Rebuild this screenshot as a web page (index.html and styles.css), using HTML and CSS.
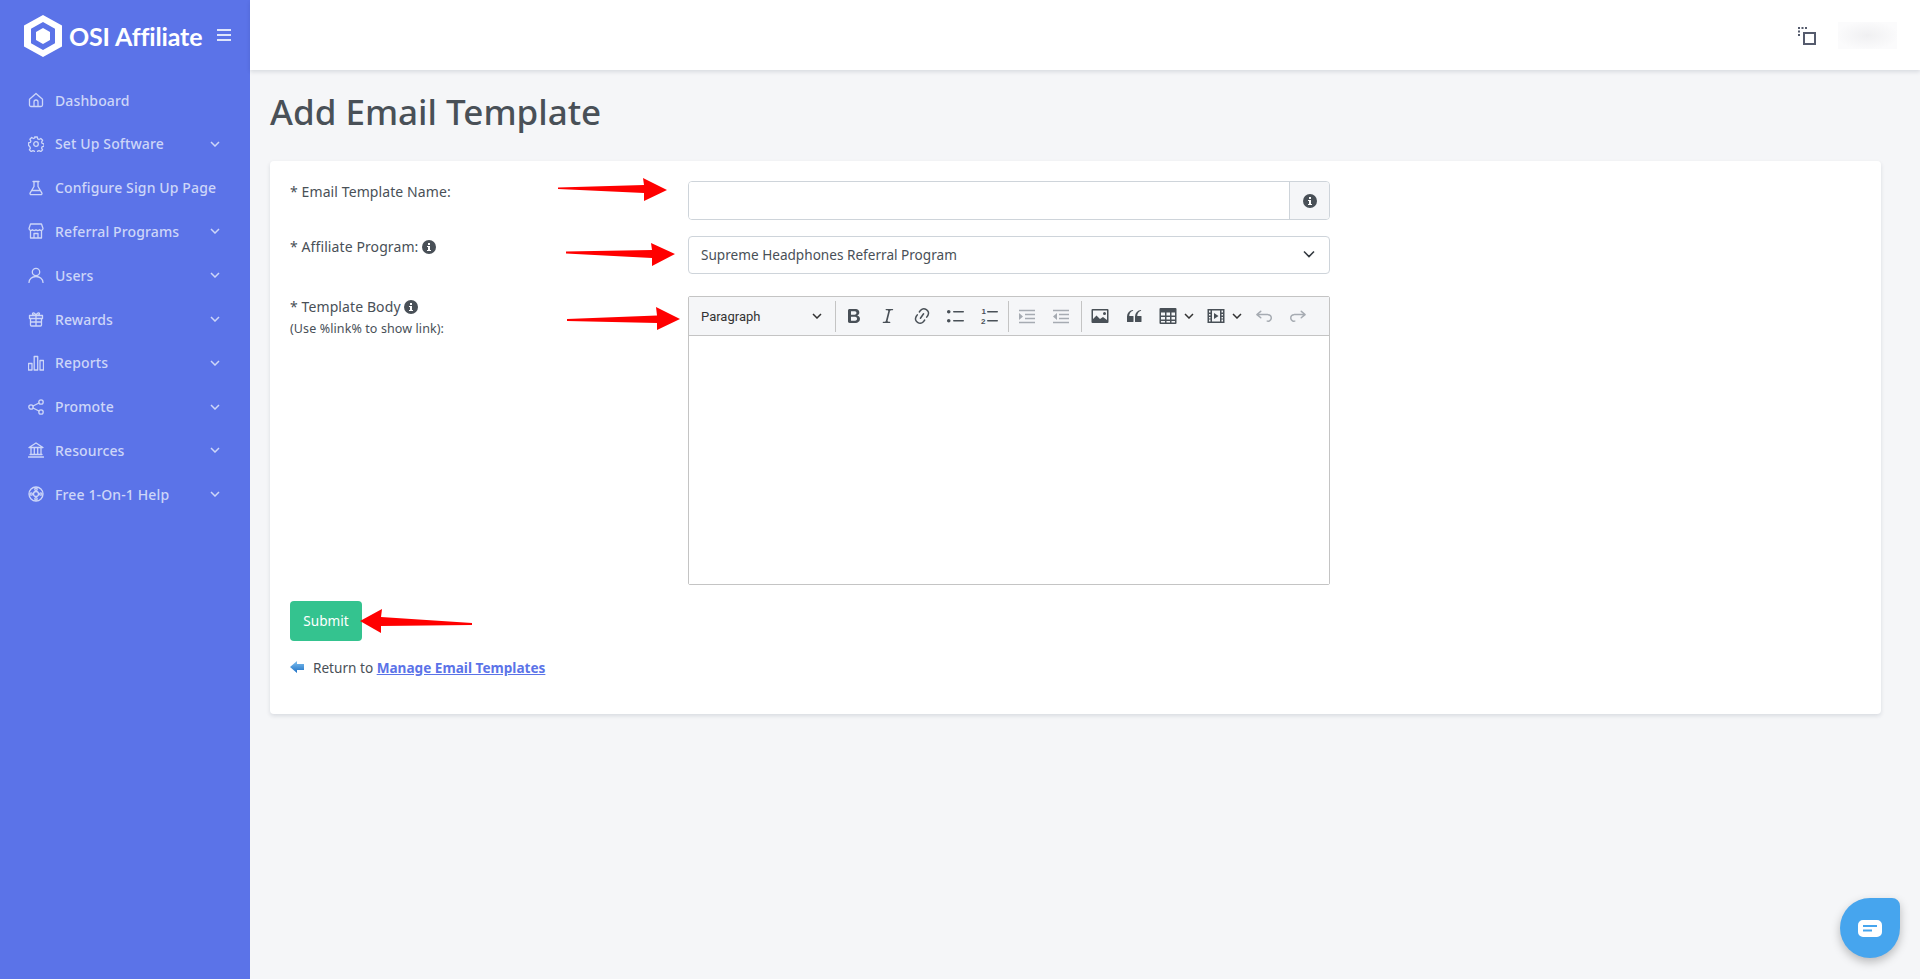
FILE: index.html
```html
<!DOCTYPE html>
<html lang="en">
<head>
<meta charset="utf-8">
<title>Add Email Template</title>
<link rel="stylesheet" href="styles.css">
</head>
<body>
<div class="app">
  <aside class="sidebar">
    <div class="brand">
      <svg class="brand-mark" viewBox="0 0 38 42"><path fill="#fff" fill-rule="evenodd" d="M19 0 38 10.500v21L19 42 0 31.500v-21zM19 7 7 13.800v14.400L19 35l12-6.800V13.800z"/><path fill="#fff" d="M19 13l7 4v8l-7 4-7-4v-8z"/></svg>
      <span class="brand-name">OSI Affiliate</span>
      <svg class="brand-menu" viewBox="0 0 14 12"><path d="M0 1h14M0 6h14M0 11h14" stroke="#dfe5fb" stroke-width="2"/></svg>
    </div>
    <nav class="nav">
      <a class="nav-item"><svg class="nav-icon" viewBox="0 0 16 16"><path d="M1.500 7.200 8 1.500l6.500 5.700V13a1.500 1.500 0 0 1-1.500 1.500H3A1.500 1.500 0 0 1 1.500 13zM6 14.500V10a2 2 0 0 1 4 0v4.500"/></svg><span>Dashboard</span></a>
      <a class="nav-item"><svg class="nav-icon" viewBox="0 0 16 16"><circle cx="8" cy="8" r="2.300"/><path d="M6.700 1h2.600l.4 1.900 1.400.6 1.700-1 1.800 1.800-1 1.700.6 1.400 1.800.4v2.500l-1.800.4-.6 1.400 1 1.700-1.800 1.800-1.700-1-1.400.6-.4 1.800H6.700l-.4-1.800-1.400-.6-1.700 1-1.800-1.800 1-1.700-.6-1.400L.5 9.300V6.800l1.800-.4.6-1.400-1-1.700 1.800-1.800 1.700 1 1.400-.6z" stroke-linejoin="round"/></svg><span>Set Up Software</span><svg class="nav-chev" viewBox="0 0 10 6"><path d="M1 1l4 4 4-4"/></svg></a>
      <a class="nav-item"><svg class="nav-icon" viewBox="0 0 16 16"><path d="M5 1.500h6M6 1.500v5L2.200 12.800c-.6 1 .1 1.900 1.100 1.900h9.400c1 0 1.700-.9 1.100-1.900L10 6.500v-5M4.500 10.500h7"/></svg><span>Configure Sign Up Page</span></a>
      <a class="nav-item"><svg class="nav-icon" viewBox="0 0 16 16"><path d="M2.500 1h11l1.500 4.500a2 2 0 0 1-3.500 1.200 2.600 2.600 0 0 1-3.500 0 2.600 2.600 0 0 1-3.500 0A2 2 0 0 1 1 5.500zM2.500 7.500V15h11V7.500M6 15v-4.500h4V15"/></svg><span>Referral Programs</span><svg class="nav-chev" viewBox="0 0 10 6"><path d="M1 1l4 4 4-4"/></svg></a>
      <a class="nav-item"><svg class="nav-icon" viewBox="0 0 16 16"><circle cx="8" cy="5" r="3.700"/><path d="M1 15.500c0-3.500 3-6 7-6s7 2.500 7 6"/></svg><span>Users</span><svg class="nav-chev" viewBox="0 0 10 6"><path d="M1 1l4 4 4-4"/></svg></a>
      <a class="nav-item"><svg class="nav-icon" viewBox="0 0 16 16"><path d="M2.500 7.500V14a1 1 0 0 0 1 1h9a1 1 0 0 0 1-1V7.500M1.500 4.500h13v3h-13zM8 4.500V15M2.500 11h11M8 4.500C6 4.500 4.500 3.800 4.500 2.600 4.500 1.500 6.800 1 8 4.500 9.200 1 11.500 1.500 11.500 2.600c0 1.200-1.500 1.900-3.500 1.900z"/></svg><span>Rewards</span><svg class="nav-chev" viewBox="0 0 10 6"><path d="M1 1l4 4 4-4"/></svg></a>
      <a class="nav-item"><svg class="nav-icon" viewBox="0 0 16 16"><path d="M.5 8.500h3.500V15H.5zM6.200 1.500h3.500V15H6.200zM12 5.500h3.500V15H12z"/></svg><span>Reports</span><svg class="nav-chev" viewBox="0 0 10 6"><path d="M1 1l4 4 4-4"/></svg></a>
      <a class="nav-item"><svg class="nav-icon" viewBox="0 0 16 16"><circle cx="3" cy="8" r="2.200"/><circle cx="13" cy="3" r="2.200"/><circle cx="13" cy="13" r="2.200"/><path d="M5 7l6-3M5 9l6 3"/></svg><span>Promote</span><svg class="nav-chev" viewBox="0 0 10 6"><path d="M1 1l4 4 4-4"/></svg></a>
      <a class="nav-item"><svg class="nav-icon" viewBox="0 0 16 16"><path d="M1 5.500 8 1l7 4.500zM3 5.500V12M6.300 5.500V12M9.700 5.500V12M13 5.500V12M2 12.500h12M.5 15h15"/></svg><span>Resources</span><svg class="nav-chev" viewBox="0 0 10 6"><path d="M1 1l4 4 4-4"/></svg></a>
      <a class="nav-item"><svg class="nav-icon" viewBox="0 0 16 16"><circle cx="8" cy="8" r="7"/><circle cx="8" cy="8" r="2.500"/><circle cx="8" cy="3.200" r="1.200"/><circle cx="8" cy="12.800" r="1.200"/><circle cx="3.200" cy="8" r="1.200"/><circle cx="12.800" cy="8" r="1.200"/></svg><span>Free 1-On-1 Help</span><svg class="nav-chev" viewBox="0 0 10 6"><path d="M1 1l4 4 4-4"/></svg></a>
    </nav>
  </aside>

  <div class="main">
    <header class="topbar">
      <svg class="top-icon" viewBox="0 0 18 18"><path class="dash" d="M1 9V1h9"/><rect x="6" y="6" width="11" height="11"/></svg>
      <div class="top-user"></div>
    </header>
    <main class="content">
      <h1 class="title">Add Email Template</h1>
      <section class="card">
        <div class="row row-name">
          <label class="label">* Email Template Name:</label>
          <div class="input-group">
            <div class="input"></div>
            <div class="addon"><svg class="info" viewBox="0 0 14 14"><circle cx="7" cy="7" r="7"/><path d="M6 6h2v4h1v1H5v-1h1V7H5V6zM6 3h2v2H6z" fill="#fff"/></svg></div>
          </div>
        </div>
        <div class="row row-program">
          <label class="label">* Affiliate Program: <svg class="info" viewBox="0 0 14 14"><circle cx="7" cy="7" r="7"/><path d="M6 6h2v4h1v1H5v-1h1V7H5V6zM6 3h2v2H6z" fill="#fff"/></svg></label>
          <div class="select"><span>Supreme Headphones Referral Program</span><svg class="select-chev" viewBox="0 0 12 8"><path d="M1 1.500l5 5 5-5"/></svg></div>
        </div>
        <div class="row row-body">
          <label class="label">* Template Body <svg class="info" viewBox="0 0 14 14"><circle cx="7" cy="7" r="7"/><path d="M6 6h2v4h1v1H5v-1h1V7H5V6zM6 3h2v2H6z" fill="#fff"/></svg><small class="hint">(Use %link% to show link):</small></label>
          <div class="editor">
            <div class="toolbar">
              <div class="tb-drop"><span>Paragraph</span><svg class="tb-chev" viewBox="0 0 10 6"><path d="M1 1l4 4 4-4"/></svg></div>
              <i class="tb-sep"></i>
              <button class="tb-btn"><svg viewBox="0 0 20 20"><path d="M10.187 17H5.773c-.637 0-1.092-.138-1.364-.415-.273-.277-.409-.718-.409-1.323V4.738c0-.617.14-1.062.419-1.332.279-.27.73-.406 1.354-.406h4.680c.69 0 1.288.041 1.793.124.506.083.96.242 1.360.478.341.197.644.447.906.75a3.262 3.262 0 0 1 .808 2.162c0 1.401-.722 2.426-2.167 3.075C15.050 10.175 16 11.315 16 13.010a3.756 3.756 0 0 1-2.296 3.504 6.100 6.100 0 0 1-1.517.377c-.571.073-1.238.11-2 .11zm-.217-6.217H7v4.087h3.069c1.977 0 2.965-.69 2.965-2.072 0-.707-.256-1.220-.768-1.537-.512-.319-1.277-.478-2.296-.478zM7 5.130v3.619h2.606c.729 0 1.292-.067 1.690-.2a1.600 1.600 0 0 0 .91-.765c.165-.267.247-.566.247-.897 0-.707-.26-1.176-.778-1.409-.519-.232-1.310-.348-2.375-.348H7z"/></svg></button>
              <button class="tb-btn"><svg viewBox="0 0 20 20"><path d="m9.586 14.633.021.004c-.036.335.095.655.393.962.082.083.173.15.274.201h1.474a.6.6 0 1 1 0 1.200H5.304a.6.6 0 0 1 0-1.200h1.150c.474-.07.809-.182 1.005-.334.157-.122.291-.32.404-.597l2.416-9.550a1.053 1.053 0 0 0-.281-.823 1.120 1.120 0 0 0-.442-.296H8.150a.6.6 0 0 1 0-1.200h6.443a.6.6 0 1 1 0 1.200h-1.195c-.376.056-.65.155-.823.296-.215.175-.423.439-.623.79l-2.366 9.347z"/></svg></button>
              <button class="tb-btn"><svg viewBox="0 0 20 20"><path d="m11.077 15 .991-1.416a.75.75 0 1 1 1.229.86l-1.148 1.640a.748.748 0 0 1-.217.206 5.251 5.251 0 0 1-8.503-5.955.741.741 0 0 1 .12-.274l1.147-1.639a.75.75 0 1 1 1.228.86L4.933 10.700l.006.003a3.750 3.750 0 0 0 6.132 4.294l.006.004zm5.494-5.335a.748.748 0 0 1-.12.274l-1.147 1.639a.75.75 0 1 1-1.228-.86l.86-1.230a3.750 3.750 0 0 0-6.144-4.301l-.86 1.229a.75.75 0 0 1-1.229-.86l1.148-1.640a.748.748 0 0 1 .217-.206 5.251 5.251 0 0 1 8.503 5.955zm-4.563-2.532a.75.75 0 0 1 .184 1.045l-3.155 4.505a.75.75 0 1 1-1.229-.86l3.155-4.506a.75.75 0 0 1 1.045-.184z"/></svg></button>
              <button class="tb-btn"><svg viewBox="0 0 20 20"><path d="M7 5.750c0 .414.336.75.75.75h9.500a.75.75 0 1 0 0-1.500h-9.500a.75.75 0 0 0-.75.75zm-6 0C1 4.784 1.784 4 2.750 4s1.750.784 1.750 1.750S3.716 7.500 2.750 7.500 1 6.716 1 5.750zm6 9c0 .414.336.75.75.75h9.500a.75.75 0 1 0 0-1.500h-9.500a.75.75 0 0 0-.75.75zm-6 0c0-.966.784-1.750 1.750-1.750s1.750.784 1.750 1.750-.784 1.750-1.750 1.750S1 15.716 1 14.750z"/></svg></button>
              <button class="tb-btn"><svg viewBox="0 0 20 20"><path d="M7 5.750c0 .414.336.75.75.75h9.500a.75.75 0 1 0 0-1.500h-9.500a.75.75 0 0 0-.75.75zm0 9c0 .414.336.75.75.75h9.500a.75.75 0 1 0 0-1.500h-9.500a.75.75 0 0 0-.75.75z"/><text class="tb-num" x="1.500" y="8">1</text><text class="tb-num" x="1" y="18">2</text></svg></button>
              <i class="tb-sep tb-sep-b"></i>
              <button class="tb-btn tb-off"><svg viewBox="0 0 20 20"><path d="M2 3.750h16v1.500H2zM8 7.750h10v1.500H8zM8 11.750h10v1.500H8zM2 15.750h16v1.500H2zM2 7l4 3.500L2 14z"/></svg></button>
              <button class="tb-btn tb-off"><svg viewBox="0 0 20 20"><path d="M2 3.750h16v1.500H2zM8 7.750h10v1.500H8zM8 11.750h10v1.500H8zM2 15.750h16v1.500H2zM6 7l-4 3.500L6 14z"/></svg></button>
              <i class="tb-sep tb-sep-c"></i>
              <button class="tb-btn"><svg viewBox="0 0 20 20"><path fill-rule="evenodd" d="M2.500 3h15a1 1 0 0 1 1 1v12a1 1 0 0 1-1 1h-15a1 1 0 0 1-1-1V4a1 1 0 0 1 1-1zM3 4.500V13l3.500-3.500L10 13l3-2 4 3V4.500zM14.500 6a1.500 1.500 0 1 1 0 3 1.500 1.500 0 0 1 0-3z"/></svg></button>
              <button class="tb-btn"><svg viewBox="0 0 20 20"><path d="M3 10.423a6.500 6.500 0 0 1 6.056-6.408l.038.67C6.448 5.423 5.354 7.663 5.220 10H9c.552 0 .5.432.5.986v4.511c0 .554-.448.503-1 .503h-5c-.552 0-.5-.449-.5-1.003v-4.574zm8 0a6.500 6.500 0 0 1 6.056-6.408l.038.67c-2.646.739-3.740 2.979-3.873 5.315H17c.552 0 .5.432.5.986v4.511c0 .554-.448.503-1 .503h-5c-.552 0-.5-.449-.5-1.003v-4.574z"/></svg></button>
              <button class="tb-btn tb-split"><svg viewBox="0 0 20 20"><path fill-rule="evenodd" d="M2.500 2h15a1 1 0 0 1 1 1v14a1 1 0 0 1-1 1h-15a1 1 0 0 1-1-1V3a1 1 0 0 1 1-1zM3 6.500v3h4v-3zm5.500 0v3h3.500v-3zm5 0v3H17v-3zM3 11v2.500h4V11zm5.500 0v2.500h3.500V11zm5 0v2.500H17V11zM3 15v1.500h4V15zm5.500 0v1.500h3.500V15zm5 0v1.500H17V15z"/></svg><svg class="tb-chev" viewBox="0 0 10 6"><path d="M1 1l4 4 4-4"/></svg></button>
              <button class="tb-btn tb-split"><svg viewBox="0 0 20 20"><path fill-rule="evenodd" d="M1.500 3h17v14h-17zM3 4.500v2h1.500v-2zM3 8v1.500h1.500V8zM3 11v1.500h1.500V11zM3 13.500v2h1.500v-2zM15.500 4.500v2H17v-2zM15.500 8v1.500H17V8zM15.500 11v1.500H17V11zM15.500 13.500v2H17v-2zM6 4.500v11h8v-11zM8 7l4.500 3L8 13z"/></svg><svg class="tb-chev" viewBox="0 0 10 6"><path d="M1 1l4 4 4-4"/></svg></button>
              <button class="tb-btn tb-off"><svg viewBox="0 0 20 20"><path d="m5.042 9.367 2.189 1.837a.75.75 0 0 1-.965 1.149l-3.788-3.180a.747.747 0 0 1-.21-.284.75.75 0 0 1 .17-.945L6.230 4.762a.75.75 0 1 1 .964 1.150L4.863 7.866h8.917A.75.75 0 0 1 14 7.900a4 4 0 1 1-1.477 7.718l.344-1.489a2.500 2.500 0 1 0 1.094-4.730l.008-.032H5.042z"/></svg></button>
              <button class="tb-btn tb-off"><svg viewBox="0 0 20 20"><path d="m14.958 9.367-2.189 1.837a.75.75 0 0 0 .965 1.149l3.788-3.180a.747.747 0 0 0 .21-.284.75.75 0 0 0-.17-.945L13.770 4.762a.75.75 0 1 0-.964 1.150l2.331 1.955H6.220A.75.75 0 0 0 6 7.900a4 4 0 1 0 1.477 7.718l-.344-1.489A2.500 2.500 0 1 1 6.039 9.400l-.008-.032h8.927z"/></svg></button>
            </div>
            <div class="editor-area"></div>
          </div>
        </div>
        <button class="submit">Submit</button>
        <p class="return">
          <svg class="back" viewBox="0 0 14 12"><defs><linearGradient id="backg" x1="0" y1="0" x2="0" y2="1"><stop offset="0" stop-color="#7fc0f0"/><stop offset="1" stop-color="#1c6fc4"/></linearGradient></defs><path fill="url(#backg)" d="M7 0v3h7v6H7v3L0 6z"/></svg>
          <span>Return to <a class="return-link">Manage Email Templates</a></span>
        </p>
      </section>
    </main>
  </div>

  <svg class="arrows" viewBox="0 0 1920 979" aria-hidden="true">
    <path d="M558 187.500 644 185 643 178 667 190 644 201 644 193 558 189z"/>
    <path d="M566 251.500 652 250 651 243 675 254 652 266 652 258 566 253.500z"/>
    <path d="M567 319 657 315.500 656 307 680 319 657 330 657 323 567 321z"/>
    <path d="M472 623 381 617 382 609 360 621 381 633 381 626 472 625z"/>
  </svg>

  <div class="chat"><svg viewBox="0 0 24 17"><path fill="#fff" fill-rule="evenodd" d="M5 0h14a5 5 0 0 1 5 5v7a5 5 0 0 1-5 5H5a5 5 0 0 1-5-5V5a5 5 0 0 1 5-5zM5 5v2h14V5zM5 9.500v2h9v-2z"/></svg></div>
</div>
</body>
</html>
```
FILE: styles.css
```css
* { box-sizing: border-box; }
html, body { margin: 0; height: 100%; }
body {
  font-family: "Noto Sans", "Liberation Sans", sans-serif;
  font-size: 13.6px;
  color: #495057;
  background: #f5f6f8;
  overflow: hidden;
}
.app { display: flex; height: 979px; position: relative; }

.sidebar { width: 250px; flex: none; background: #5b73e8; }
.brand { height: 70px; display: flex; align-items: center; padding: 1px 19px 0 24px; }
.brand-mark { width: 38px; height: 42px; flex: none; }
.brand-name { margin-left: 7px; color: #fff; font-family: Lato, sans-serif; font-size: 25px; font-weight: 700; white-space: nowrap; letter-spacing: -.15px; }
.brand-menu { width: 14px; height: 12px; margin-left: auto; margin-top: -2px; flex: none; }

.nav { padding-top: 8.200px; }
.nav-item { height: 43.800px; display: flex; align-items: center; padding: 0 30px 0 28px; color: #cdd6f8; font-size: 14px; font-weight: 500; letter-spacing: .13px; white-space: nowrap; }
.nav-icon { width: 16px; height: 16px; flex: none; margin-right: 11px; fill: none; stroke: #cdd6f8; stroke-width: 1.300; stroke-linecap: round; stroke-linejoin: round; }
.nav-chev { width: 10px; height: 6px; margin-left: auto; fill: none; stroke: #cdd6f8; stroke-width: 1.500; }

.main { flex: 1; min-width: 0; display: flex; flex-direction: column; }
.topbar { height: 70px; flex: none; background: #fff; box-shadow: 0 2px 4px rgba(15, 34, 58, .12); display: flex; align-items: center; padding: 0 23px 0 0; justify-content: flex-end; }
.top-icon { width: 18px; height: 18px; margin-right: 22px; margin-top: 2px; fill: #fff; stroke: #555b6d; stroke-width: 2; }
.top-icon .dash { fill: none; stroke-dasharray: 2 1.500; }
.top-user { width: 59px; height: 27px; background: radial-gradient(ellipse at center, #f0f0f2 0, #fbfbfc 75%); }

.content { flex: 1; padding: 0 39px 0 20px; }
.title { margin: 0; padding-top: 18px; height: 91px; font-size: 35px; line-height: 47px; font-weight: 500; color: #495057; }

.card { background: #fff; border-radius: 4px; box-shadow: 0 2px 4px rgba(15, 34, 58, .12); height: 553px; padding: 20px; }
.row { display: grid; grid-template-columns: 398px 642px; }
.row-name { height: 55px; }
.row-program { height: 60px; }
.row-body { height: 305px; }
.label { font-size: 14px; letter-spacing: .1px; line-height: 21px; }
.info { width: 14px; height: 14px; fill: #495057; vertical-align: -1.500px; }
.hint { display: block; font-size: 12.500px; line-height: 23px; }

.input-group { display: flex; height: 39px; border: 1px solid #ced4da; border-radius: 4px; overflow: hidden; }
.input { flex: 1; background: #fff; }
.addon { width: 40px; background: #f5f6f8; border-left: 1px solid #ced4da; display: flex; align-items: center; justify-content: center; }

.select { height: 38px; border: 1px solid #ced4da; border-radius: 4px; display: flex; align-items: center; justify-content: space-between; padding: 0 14px 2px 12px; font-size: 13.6px; }
.select-chev { width: 12px; height: 8px; fill: none; stroke: #343a40; stroke-width: 1.600; }

.editor { height: 289px; border: 1px solid #c4c4c4; border-radius: 2px; display: flex; flex-direction: column; }
.toolbar { height: 39px; flex: none; display: flex; align-items: center; background: #f5f6f8; border-bottom: 1px solid #c4c4c4; }
.tb-drop { width: 146px; flex: none; display: flex; align-items: center; justify-content: space-between; padding: 0 13px 0 12px; font-family: Roboto, sans-serif; font-size: 13px; color: #333; }
.tb-chev { width: 10px; height: 6px; fill: none; stroke: #333; stroke-width: 1.500; }
.tb-sep { width: 1px; height: 31px; background: #c4c4c4; flex: none; margin-right: 1px; }
.tb-sep-b { margin-left: 1px; }
.tb-sep-c { margin-left: 3px; }
.tb-btn { width: 34px; height: 34px; flex: none; padding: 0; border: 0; background: none; display: flex; align-items: center; justify-content: center; gap: 6px; }
.tb-btn svg { width: 20px; height: 20px; fill: #495057; flex: none; }
.tb-btn .tb-chev { width: 10px; height: 6px; fill: none; stroke: #333; }
.tb-split { width: 48px; justify-content: flex-start; padding-left: 7px; gap: 6px; }
.tb-off svg { fill: #a6abb2; }
.tb-num { font-family: "Liberation Sans", sans-serif; font-size: 8px; font-weight: 700; }
.editor-area { flex: 1; background: #fff; }

.submit { display: block; width: 72px; height: 40px; border: 0; border-radius: 4px; background: #34c38f; color: #fff; font: inherit; font-size: 13.6px; padding: 0 0 2px; }
.return { margin: 16px 0 0; height: 20px; display: flex; align-items: center; gap: 9px; font-size: 13.6px; }
.back { width: 14px; height: 12px; flex: none; }
.return-link { color: #5b73e8; font-weight: 700; text-decoration: underline; }

.arrows { position: absolute; left: 0; top: 0; width: 1920px; height: 979px; pointer-events: none; }
.arrows path { fill: #f00; }

.chat { position: absolute; left: 1840px; top: 898px; width: 60px; height: 60px; background: #46a5ee; border-radius: 50% 8px 50% 50%; box-shadow: 0 4px 10px rgba(0, 0, 0, .25); display: flex; align-items: center; justify-content: center; }
.chat svg { width: 24px; height: 17px; }
```
